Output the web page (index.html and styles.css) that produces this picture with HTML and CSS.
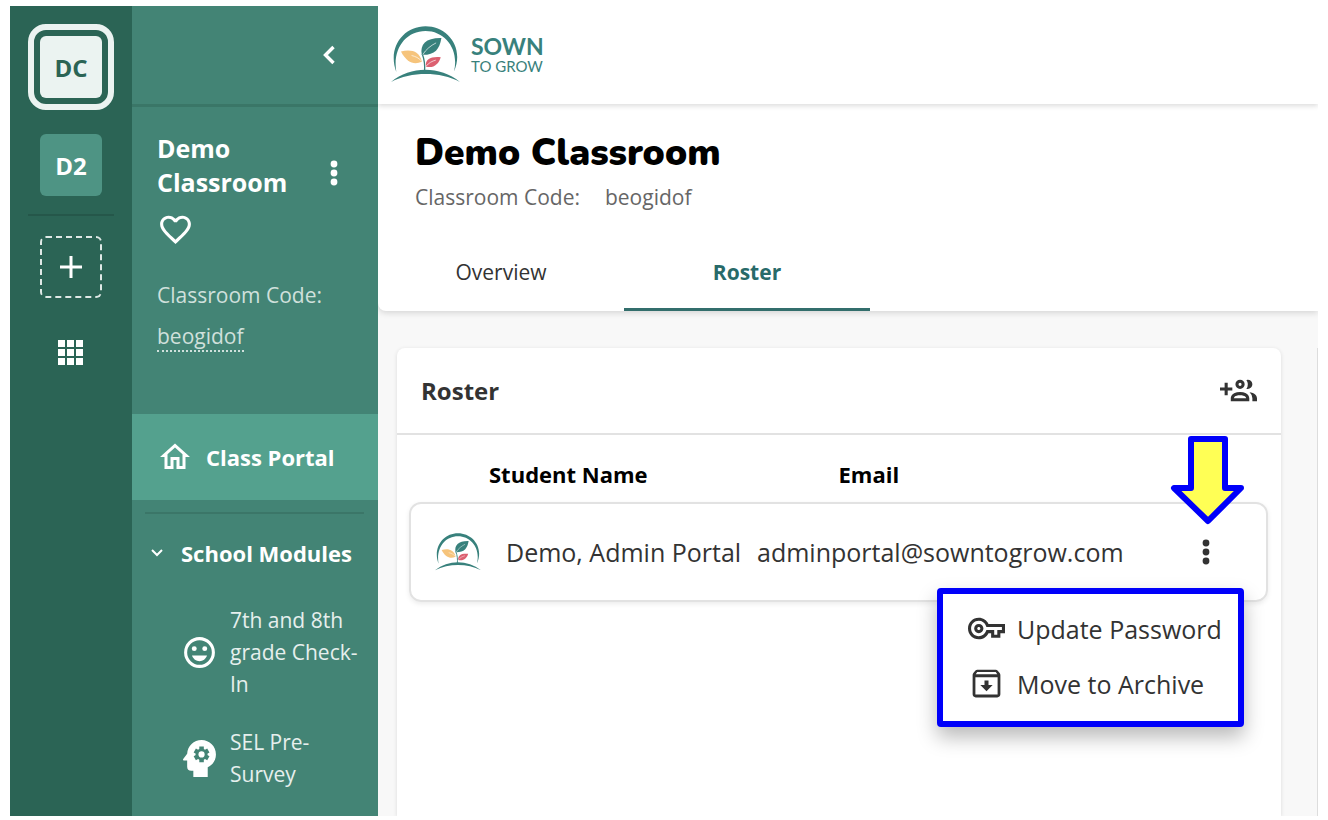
FILE: index.html
```html
<!doctype html>
<html lang="en">
  <head>
    <meta charset="UTF-8" />
    <meta name="viewport" content="width=device-width, initial-scale=1.0" />
    <title>Demo Classroom - Roster</title>
    <link rel="stylesheet" href="styles.css">
  </head>
  <body>
    <!-- logo mark, used in the top bar and as the student avatar -->
    <svg class="defs" width="0" height="0" aria-hidden="true">
      <symbol id="sprout" viewBox="18 33 208 172">
        <path fill="#38817c" d="M34 172C6 98 56 34 122 34S240 98 208 170C224 104 182 48 122 48S22 102 34 172Z" />
        <path fill="#38817c" d="M18 202C78 153 165 153 226 202C165 170 80 170 18 202Z" />
        <path fill="none" stroke="#38817c" stroke-width="4" d="M119 172C121 150 119 135 112 117" />
        <path fill="#38817c" d="M111 120C104 88 124 68 170 69C164 104 150 121 111 120Z" />
        <path fill="#f6c47c" d="M48 110C76 103 104 107 111 141C88 151 66 145 48 110Z" />
        <path fill="#dc6070" d="M123 155C120 132 140 124 168 127C162 148 145 162 123 155Z" />
        <path fill="none" stroke="#fff" stroke-width="2" d="M114 119C124 103 138 92 154 84M80 122C92 125 101 129 109 138M124 154C132 144 142 139 153 136" />
      </symbol>
    </svg>

    <div class="app">
      <nav class="rail">
        <button class="room room-active">DC</button>
        <button class="room">D2</button>
        <hr class="rail-line">
        <button class="add-room" aria-label="Add classroom">
          <svg width="22" height="22" viewBox="0 0 22 22"><path stroke="#fff" stroke-width="3" d="M11 0v22M0 11h22" /></svg>
        </button>
        <button class="icon-btn" aria-label="All classrooms">
          <svg width="26" height="26" viewBox="0 0 26 26" fill="#fff"><path d="M0 0h7v7H0zM9 0h7v7H9zM18 0h7v7h-7zM0 9h7v7H0zM9 9h7v7H9zM18 9h7v7h-7zM0 18h7v7H0zM9 18h7v7H9zM18 18h7v7h-7z" /></svg>
        </button>
      </nav>

      <aside class="sidebar">
        <div class="sidebar-top">
          <button class="icon-btn" aria-label="Collapse">
            <svg width="12" height="20" viewBox="0 0 12 20"><path fill="none" stroke="#fff" stroke-width="3.4" d="M10.5 2L2.5 10L10.5 18" /></svg>
          </button>
        </div>
        <div class="class-info">
          <div class="class-head">
            <h2>Demo Classroom</h2>
            <button class="icon-btn" aria-label="Classroom options">
              <svg width="8" height="26" viewBox="0 0 8 26" fill="#fff"><circle cx="4" cy="4" r="3.4" /><circle cx="4" cy="13" r="3.4" /><circle cx="4" cy="22" r="3.4" /></svg>
            </button>
          </div>
          <button class="icon-btn heart" aria-label="Favorite">
            <svg width="37" height="37" viewBox="0 0 24 24" fill="#fff"><path d="M12.1 18.55L12 18.65L11.89 18.55C7.14 14.24 4 11.39 4 8.5C4 6.5 5.5 5 7.5 5C9.04 5 10.54 6 11.07 7.36H12.93C13.46 6 14.96 5 16.5 5C18.5 5 20 6.5 20 8.5C20 11.39 16.86 14.24 12.1 18.55M16.5 3C14.76 3 13.09 3.81 12 5.08C10.91 3.81 9.24 3 7.5 3C4.42 3 2 5.41 2 8.5C2 12.27 5.4 15.36 10.55 20.03L12 21.35L13.45 20.03C18.6 15.36 22 12.27 22 8.5C22 5.41 19.58 3 16.5 3Z" /></svg>
          </button>
          <p class="code-label">Classroom Code:</p>
          <p class="code-label"><span class="code">beogidof</span></p>
        </div>
        <a class="portal" href="#">
          <svg width="36" height="36" viewBox="0 0 24 24" fill="#fff"><path d="M12 5.69L17 10.19V18H15V12H9V18H7V10.19L12 5.69M12 3L2 12H5V20H11V14H13V20H19V12H22" /></svg>
          Class Portal
        </a>
        <hr class="side-line">
        <button class="modules">
          <svg width="12" height="8" viewBox="0 0 12 8"><path fill="none" stroke="#fff" stroke-width="2" d="M1 1L6 6L11 1" /></svg>
          School Modules
        </button>
        <a class="module" href="#">
          <svg width="37" height="37" viewBox="0 0 24 24" fill="#fff">
            <circle cx="12" cy="12" r="9" fill="none" stroke="#fff" stroke-width="2" />
            <circle cx="8.6" cy="9.5" r="1.6" /><circle cx="15.4" cy="9.5" r="1.6" />
            <path d="M7.1 13.9h9.8c-.8 2.2-2.7 3.7-4.9 3.7s-4.1-1.5-4.9-3.7z" />
          </svg>
          <span>7th and 8th grade Check-In</span>
        </a>
        <a class="module" href="#">
          <svg width="37" height="37" viewBox="3 3 18 18">
            <path fill="#fff" d="M13 3C9.23 3 6.19 5.95 6 9.66L4.08 12.19C3.84 12.5 4.08 13 4.5 13H6V16A2 2 0 0 0 8 18H9V21H16V16.31C18.37 15.19 20 12.8 20 10C20 6.14 16.88 3 13 3" />
            <path stroke="#438475" stroke-width="2.2" d="M13 6.2V13.8M9.7 8.1L16.3 11.9M9.7 11.9L16.3 8.1" />
            <circle cx="13" cy="10" r="2.9" fill="#438475" />
            <circle cx="13" cy="10" r="1.5" fill="#fff" />
          </svg>
          <span>SEL Pre-Survey</span>
        </a>
      </aside>

      <main class="main">
        <header class="topbar">
          <a class="brand" href="#">
            <svg width="69" height="57"><use href="#sprout" /></svg>
            <span class="brand-text"><b>SOWN</b>TO GROW</span>
          </a>
        </header>

        <section class="class-header">
          <h1>Demo Classroom</h1>
          <p class="sub"><span>Classroom Code:</span><span>beogidof</span></p>
          <div class="tabs">
            <a class="tab" href="#">Overview</a>
            <a class="tab tab-active" href="#">Roster</a>
          </div>
        </section>

        <div class="content">
          <section class="card">
            <div class="card-head">
              <h3>Roster</h3>
              <button class="icon-btn" aria-label="Add students">
                <svg width="37" height="37" viewBox="0 0 24 24" fill="#333"><path d="M13 11A3 3 0 1 0 10 8A3 3 0 0 0 13 11M13 7A1 1 0 1 1 12 8A1 1 0 0 1 13 7M17.11 10.86A5 5 0 0 0 17.11 5.14A2.91 2.91 0 0 1 18 5A3 3 0 0 1 18 11A2.91 2.91 0 0 1 17.11 10.86M13 13C7 13 7 17 7 17V19H19V17S19 13 13 13M9 17C9 16.71 9.32 15 13 15C16.5 15 16.94 16.56 17 17M24 17V19H21V17A5.6 5.6 0 0 0 19.2 13.06C24 13.55 24 17 24 17M8 12H5V15H3V12H0V10H3V7H5V10H8Z" /></svg>
              </button>
            </div>
            <table class="roster">
              <thead>
                <tr>
                  <th>Student Name</th>
                  <th>Email</th>
                </tr>
              </thead>
              <tbody>
                <tr>
                  <td class="avatar"><svg width="46" height="38"><use href="#sprout" /></svg></td>
                  <td class="name">Demo, Admin Portal</td>
                  <td class="email">adminportal@sowntogrow.com</td>
                  <td class="actions">
                    <button class="icon-btn" aria-label="Student options">
                      <svg width="8" height="26" viewBox="0 0 8 26" fill="#333"><circle cx="4" cy="4" r="3.4" /><circle cx="4" cy="13" r="3.4" /><circle cx="4" cy="22" r="3.4" /></svg>
                    </button>
                    <svg class="arrow" width="74" height="90" viewBox="0 0 74 90"><path fill="#ffff55" stroke="#0000fa" stroke-width="6" stroke-linejoin="round" d="M21 4H55V53H71L38 86L4 53H21Z" /></svg>
                    <div class="menu">
                      <button class="menu-item">
                        <svg width="37" height="37" viewBox="0 0 24 24" fill="#333"><path d="M21 18H15V15H13.3C12.2 17.4 9.7 19 7 19C3.1 19 0 15.9 0 12S3.1 5 7 5C9.7 5 12.2 6.6 13.3 9H24V15H21V18M17 16H19V13H22V11H11.9L11.7 10.3C11 8.3 9.1 7 7 7C4.2 7 2 9.2 2 12S4.2 17 7 17C9.1 17 11 15.7 11.7 13.7L11.9 13H17V16M7 15C5.3 15 4 13.7 4 12S5.3 9 7 9 10 10.3 10 12 8.7 15 7 15M7 11C6.4 11 6 11.4 6 12S6.4 13 7 13 8 12.6 8 12 7.6 11 7 11Z" /></svg>
                        Update Password
                      </button>
                      <button class="menu-item">
                        <svg width="37" height="37" viewBox="0 0 24 24" fill="#333"><path fill-rule="evenodd" d="M20.54 5.23L19.15 3.55C18.88 3.21 18.47 3 18 3H6C5.53 3 5.12 3.21 4.84 3.55L3.46 5.23C3.17 5.57 3 6.02 3 6.5V19C3 20.1 3.9 21 5 21H19C20.1 21 21 20.1 21 19V6.5C21 6.02 20.83 5.57 20.54 5.23ZM6 4.6H18L19 6H5ZM4.8 19.2V8H19.2V19.2ZM13.3 10H10.7V13H8L12 17L16 13H13.3Z" /></svg>
                        Move to Archive
                      </button>
                    </div>
                  </td>
                </tr>
              </tbody>
            </table>
          </section>
          <aside class="next-card"></aside>
        </div>
      </main>
    </div>
  </body>
</html>
```
FILE: styles.css
```css
* {
  box-sizing: border-box;
}

body {
  margin: 0;
  padding: 6px 10px 4px;
  background-color: #fff;
  color: #333;
  font-family: "Open Sans", "Noto Sans", sans-serif;
  font-size: 22px;
}

h1,
h2,
h3,
p {
  margin: 0;
}

a {
  color: inherit;
  text-decoration: none;
}

button {
  padding: 0;
  border: none;
  background: none;
  color: inherit;
  font: inherit;
  cursor: pointer;
}

svg {
  display: block;
  flex-shrink: 0;
}

hr {
  margin: 0;
  border: none;
  height: 2px;
}

.defs {
  position: absolute;
}

.icon-btn {
  display: block;
}

.app {
  display: flex;
  min-height: calc(100vh - 10px);
}

.rail {
  display: flex;
  flex-direction: column;
  align-items: center;
  width: 122px;
  flex-shrink: 0;
  padding-top: 18px;
  background-color: #2b6455;
}

.room {
  width: 62px;
  height: 62px;
  margin-bottom: 18px;
  border-radius: 6px;
  background-color: #4e9484;
  color: #fff;
  font-size: 24px;
  font-weight: bold;
}

.room-active {
  width: 86px;
  height: 86px;
  margin-bottom: 24px;
  padding: 6px;
  border: 6px solid #ebf3f1;
  border-radius: 18px;
  background-color: #ebf3f1;
  background-clip: content-box;
  color: #2b6455;
}

.rail-line {
  width: 86px;
  margin-bottom: 20px;
  background-color: #25574a;
}

.add-room {
  display: flex;
  align-items: center;
  justify-content: center;
  width: 62px;
  height: 62px;
  margin-bottom: 42px;
  border: 2px dashed #dfe9e6;
  border-radius: 6px;
}

.sidebar {
  width: 246px;
  flex-shrink: 0;
  background-color: #438475;
  color: #fff;
}

.sidebar-top {
  display: flex;
  align-items: center;
  justify-content: flex-end;
  height: 101px;
  padding-right: 43px;
  border-bottom: 3px solid #3a7667;
}

.class-info {
  height: 307px;
  padding: 24px 24px 0 25px;
}

.class-head {
  display: flex;
  align-items: flex-end;
  justify-content: space-between;
  padding-right: 16px;
}

.class-head .icon-btn {
  margin-bottom: 13px;
}

h2 {
  width: 140px;
  font-size: 25px;
  line-height: 34px;
}

.heart {
  margin: 12px 0 27px;
}

.code-label {
  color: #d0e0dc;
  font-size: 21px;
  line-height: 41px;
}

.code {
  display: inline-block;
  border-bottom: 2px dotted #d0e0dc;
  line-height: 28px;
}

.portal {
  display: flex;
  align-items: center;
  gap: 13px;
  height: 86px;
  padding-left: 25px;
  background-color: #54a18e;
  font-weight: bold;
}

.side-line {
  margin: 12px 14px 0 13px;
  background-color: #3b7668;
}

.modules {
  display: flex;
  align-items: center;
  gap: 18px;
  height: 78px;
  margin-bottom: 12px;
  padding-left: 19px;
  font-weight: bold;
}

.module {
  display: flex;
  align-items: center;
  gap: 12px;
  margin-bottom: 26px;
  padding: 0 12px 0 49px;
  color: #e6efed;
  font-size: 21px;
  line-height: 32px;
}

.main {
  flex: 1;
  min-width: 0;
  display: flex;
  flex-direction: column;
  overflow: hidden;
  background-color: #f8f8f8;
}

.topbar {
  position: relative;
  height: 98px;
  padding: 20px 13px;
  background-color: #fff;
  box-shadow: 0 2px 5px rgba(0, 0, 0, 0.14);
}

.brand {
  display: flex;
  gap: 11px;
  color: #38817c;
}

.brand-text {
  padding-top: 8px;
  font-family: Lato, sans-serif;
  font-size: 15px;
  line-height: 15px;
}

.brand-text b {
  display: block;
  font-size: 23px;
  line-height: 25px;
}

.class-header {
  background-color: #fff;
  border-radius: 0 0 0 8px;
  box-shadow: 0 2px 6px rgba(0, 0, 0, 0.14);
}

h1 {
  padding: 25px 37px 0;
  color: #000;
  font-family: Nunito, "Open Sans", sans-serif;
  font-size: 37px;
  font-weight: 900;
  line-height: 48px;
}

.sub {
  display: flex;
  gap: 25px;
  padding: 0 37px;
  color: #666;
  font-size: 21px;
  line-height: 40px;
}

.tabs {
  display: flex;
  padding-top: 20px;
}

.tab {
  width: 246px;
  border-bottom: 3px solid transparent;
  text-align: center;
  font-size: 21px;
  line-height: 71px;
}

.tab-active {
  border-color: #336e6c;
  color: #286a69;
  font-weight: bold;
}

.content {
  flex: 1;
  display: flex;
  gap: 36px;
  padding: 37px 0 0 19px;
}

.card {
  flex: 1;
  min-width: 0;
  border-radius: 8px 8px 0 0;
  background-color: #fff;
  box-shadow: 0 1px 4px rgba(0, 0, 0, 0.12);
}

.next-card {
  width: 1px;
  background-color: #ddd;
}

.card-head {
  display: flex;
  align-items: center;
  justify-content: space-between;
  height: 87px;
  padding: 0 24px;
  border-bottom: 2px solid #e2e2e2;
}

h3 {
  font-size: 24px;
}

.roster {
  display: block;
  padding: 0 13px 0 12px;
}

.roster thead,
.roster tbody {
  display: block;
}

.roster tr {
  display: flex;
  align-items: center;
}

.roster thead tr {
  height: 67px;
  padding: 10px 80px 0;
}

.roster th {
  padding: 0;
  width: 350px;
  color: #000;
  text-align: left;
}

.roster tbody tr {
  position: relative;
  height: 100px;
  padding: 0 56px 0 24px;
  border: 2px solid #e2e2e2;
  border-radius: 12px;
  box-shadow: 0 2px 5px rgba(0, 0, 0, 0.08);
  font-size: 25px;
}

.roster td {
  padding: 0;
}

.name {
  width: 251px;
  margin-left: 25px;
}

.actions {
  margin-left: auto;
}

/* points at the options button */
.arrow {
  position: absolute;
  right: 22px;
  bottom: 75px;
}

.menu {
  position: absolute;
  top: 84px;
  right: 22px;
  width: 307px;
  padding: 7px 0 10px;
  border: 6px solid #0000fa;
  border-radius: 4px;
  background-color: #fff;
  box-shadow: 0 10px 20px rgba(0, 0, 0, 0.28);
}

.menu-item {
  display: flex;
  align-items: center;
  gap: 12px;
  width: 100%;
  height: 55px;
  padding-left: 25px;
  white-space: nowrap;
}
```
